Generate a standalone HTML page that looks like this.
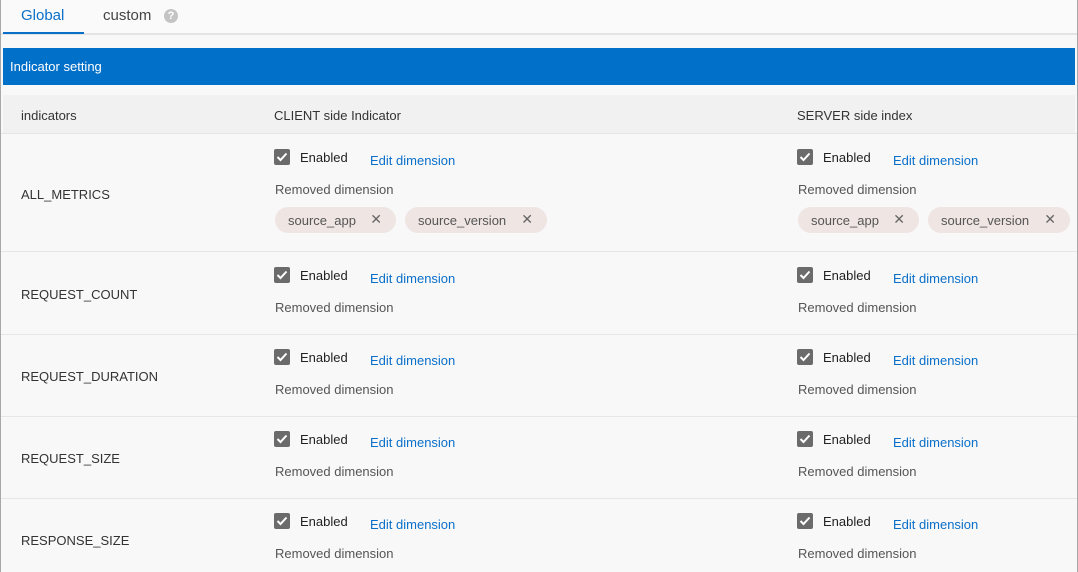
<!DOCTYPE html>
<html><head><style>
*{margin:0;padding:0;box-sizing:border-box}
body{width:1078px;height:572px;background:#fff;font-family:"Liberation Sans",sans-serif;font-size:13px;color:#333;position:relative;overflow:hidden}
.frame{position:absolute;left:0;top:0;width:1078px;height:572px;border:1px solid #a8a8a8;border-bottom:none;background:#f8f8f8}
.a{position:absolute;white-space:nowrap}
.cb{position:absolute;width:16px;height:16px;background:#6b6b6b;border-radius:2px}
.cb svg{position:absolute;left:2px;top:3px}
.link{color:#0a6fc9}
.chip{position:absolute;height:26px;border-radius:13px;background:#efe5e3;color:#555;font-size:13px;line-height:28px;padding-left:13px}
.chip span{position:absolute;right:14px;top:-2px;color:#666;font-size:14px}
.hr{position:absolute;left:1px;right:1px;height:1px;background:#e6e6e6}
</style></head><body>
<div class="frame"></div>
<div class="a" style="left:1px;top:0;width:1076px;height:33px;background:#fafafa"></div>
<div class="a" style="left:21px;top:7px;font-size:15px;color:#0a6fc9">Global</div>
<div class="a" style="left:103px;top:7px;font-size:15px;color:#444">custom</div>
<div class="a" style="left:164px;top:9px;width:14px;height:14px;border-radius:7px;background:#c4c4c4;color:#fff;font-size:11px;font-weight:bold;text-align:center;line-height:14px">?</div>
<div class="a" style="left:1px;top:33px;width:1076px;height:2px;background:#e4e4e4"></div>
<div class="a" style="left:3px;top:32px;width:81px;height:2px;background:#0a6fc9"></div>
<div class="a" style="left:3px;top:48px;width:1072px;height:37px;background:#0170c9;color:#fff;font-size:13px;line-height:37px;padding-left:7px">Indicator setting</div>
<div class="a" style="left:3px;top:95px;width:1072px;height:38px;background:#f1f1f1"></div>
<div class="a" style="left:21px;top:108px">indicators</div>
<div class="a" style="left:274px;top:108px">CLIENT side Indicator</div>
<div class="a" style="left:797px;top:108px">SERVER side index</div>
<div class="hr" style="top:133px"></div>
<div class="hr" style="top:251px"></div>
<div class="hr" style="top:334px"></div>
<div class="hr" style="top:416px"></div>
<div class="hr" style="top:498px"></div>

<div id="rows"></div>
<script>
var rows=[["ALL_METRICS",149,true],["REQUEST_COUNT",267,false],["REQUEST_DURATION",349,false],["REQUEST_SIZE",431,false],["RESPONSE_SIZE",513,false]];
var h='';
var chk='<svg width="12" height="10" viewBox="0 0 12 10"><path d="M1.5 5 L4.5 8 L10.5 1.5" stroke="#fff" stroke-width="2" fill="none"/></svg>';
rows.forEach(function(r){
 var y=r[1];
 var ly = r[2]? 187 : y+20;
 h+='<div class="a" style="left:21px;top:'+ly+'px">'+r[0]+'</div>';
 [274,797].forEach(function(x){
  h+='<div class="cb" style="left:'+x+'px;top:'+y+'px">'+chk+'</div>';
  h+='<div class="a" style="left:'+(x+26)+'px;top:'+(y+1)+'px;color:#222">Enabled</div>';
  h+='<div class="a link" style="left:'+(x+96)+'px;top:'+(y+4)+'px">Edit dimension</div>';
  h+='<div class="a" style="left:'+(x+1)+'px;top:'+(y+33)+'px;color:#555">Removed dimension</div>';
  if(r[2]){
   h+='<div class="chip" style="left:'+(x+1)+'px;top:207px;width:121px">source_app<span>✕</span></div>';
   h+='<div class="chip" style="left:'+(x+131)+'px;top:207px;width:142px">source_version<span>✕</span></div>';
  }
 });
});
document.getElementById('rows').innerHTML=h;
</script>
</body></html>
